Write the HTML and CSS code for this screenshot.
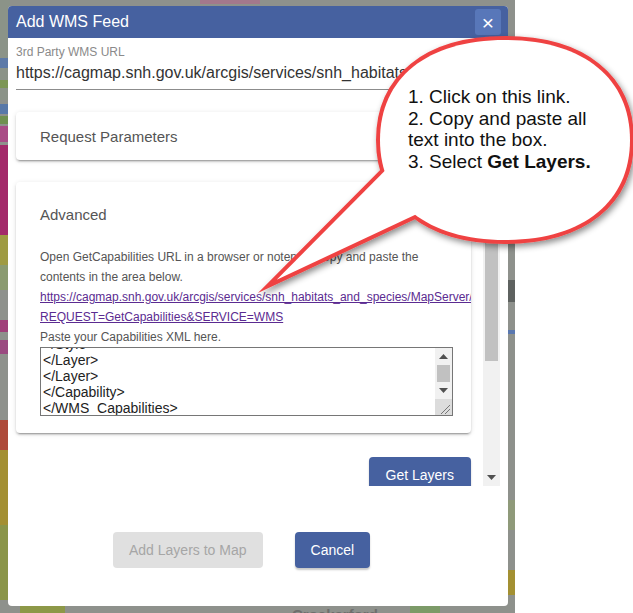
FILE: index.html
```html
<!DOCTYPE html>
<html lang="en">
<head>
    <meta charset="UTF-8">
    <meta name="viewport" content="width=device-width, initial-scale=1.0">
    <title>Add WMS Feed</title>
    <link rel="stylesheet" href="styles.css">
</head>
<body>
    <div class="page">
        <!-- dimmed map behind the dialog -->
        <div class="map">
            <svg width="515" height="613" viewBox="0 0 515 613">
                <rect width="515" height="613" fill="#8e918c"/>
                <rect x="0" y="0" width="10" height="100" fill="#8b9388"/>
                <rect x="0" y="58" width="10" height="10" fill="#5d7aa8"/>
                <rect x="0" y="80" width="10" height="8" fill="#7c9655"/>
                <rect x="0" y="104" width="10" height="10" fill="#5878a8"/>
                <rect x="0" y="116" width="10" height="8" fill="#6f9050"/>
                <rect x="0" y="126" width="10" height="16" fill="#a94c86"/>
                <rect x="0" y="145" width="10" height="90" fill="#a3296a"/>
                <rect x="0" y="235" width="10" height="30" fill="#9e9a42"/>
                <rect x="0" y="265" width="10" height="25" fill="#8a9a70"/>
                <rect x="0" y="320" width="10" height="12" fill="#a0407a"/>
                <rect x="0" y="340" width="10" height="14" fill="#9a4a80"/>
                <rect x="0" y="420" width="10" height="30" fill="#ad4a3a"/>
                <rect x="0" y="450" width="10" height="75" fill="#a38f32"/>
                <rect x="0" y="525" width="10" height="75" fill="#8a9549"/>
                <rect x="505" y="280" width="10" height="22" fill="#5e6260"/>
                <rect x="505" y="330" width="10" height="4" fill="#5a78b0"/>
                <rect x="505" y="500" width="10" height="30" fill="#8f9a7a"/>
                <rect x="505" y="570" width="10" height="25" fill="#a39032"/>
                <rect x="200" y="0" width="60" height="4" fill="#a3788c"/>
                <rect x="20" y="606" width="45" height="7" fill="#8d9848"/>
                <rect x="410" y="606" width="30" height="7" fill="#7c9a68"/>
                <text x="292" y="620" font-family="Liberation Sans, sans-serif" font-size="15" font-weight="bold" fill="#6e6e6c">Crockerford</text>
            </svg>
        </div>

        <div class="modal">
            <div class="modal-header">
                <span class="modal-title">Add WMS Feed</span>
                <span class="close-btn">&times;</span>
            </div>

            <div class="url-field">
                <div class="url-label">3rd Party WMS URL</div>
                <div class="url-input">https://cagmap.snh.gov.uk/arcgis/services/snh_habitats_and_species/MapServer/WMSServer</div>
            </div>

            <div class="scroll-area">
                <div class="scroll-content">
                    <div class="panel">
                        <div class="panel-head">Request Parameters</div>
                    </div>

                    <div class="panel open">
                        <div class="panel-head">Advanced</div>
                        <div class="panel-body">
                            <div>Open GetCapabilities URL in a browser or notepad, copy and paste the</div>
                            <div>contents in the area below.</div>
                            <a class="xml-link" href="#">https://cagmap.snh.gov.uk/arcgis/services/snh_habitats_and_species/MapServer/WMSServer?<br>REQUEST=GetCapabilities&amp;SERVICE=WMS</a>
                            <div>Paste your Capabilities XML here.</div>
                            <div class="xml-box">
                                <div class="xml-text"><div class="xml-lines">&lt;/Style&gt;
&lt;/Layer&gt;
&lt;/Layer&gt;
&lt;/Capability&gt;
&lt;/WMS_Capabilities&gt;</div></div>
                                <div class="xml-scroll">
                                    <span class="sb-btn"><svg width="9" height="5"><polygon points="0,5 9,5 4.5,0" fill="#505050"/></svg></span>
                                    <span class="xml-thumb"></span>
                                    <span class="sb-btn"><svg width="9" height="5"><polygon points="0,0 9,0 4.5,5" fill="#505050"/></svg></span>
                                    <span class="xml-corner"><svg width="17" height="16"><path d="M15 6 L6 15 M15 10 L10 15" stroke="#777" stroke-width="1"/></svg></span>
                                </div>
                            </div>
                        </div>
                    </div>

                    <div class="actions">
                        <button class="btn btn-primary btn-wide">Get Layers</button>
                    </div>
                </div>

                <div class="scrollbar">
                    <span class="sb-btn"><svg width="9" height="5"><polygon points="0,5 9,5 4.5,0" fill="#505050"/></svg></span>
                    <span class="sb-thumb"></span>
                    <span class="sb-space"></span>
                    <span class="sb-btn"><svg width="9" height="5"><polygon points="0,0 9,0 4.5,5" fill="#505050"/></svg></span>
                </div>
            </div>

            <div class="modal-footer">
                <button class="btn btn-disabled">Add Layers to Map</button>
                <button class="btn btn-primary">Cancel</button>
            </div>
        </div>

        <!-- speech bubble annotation -->
        <svg class="callout" width="633" height="613" viewBox="0 0 633 613">
            <defs>
                <filter id="bubbleShadow" x="-10%" y="-10%" width="130%" height="130%">
                    <feDropShadow dx="2" dy="3" stdDeviation="3" flood-color="#000" flood-opacity="0.45"/>
                </filter>
            </defs>
            <g filter="url(#bubbleShadow)">
                <path d="M380 140 C380 78 427 40 505 40 C583 40 630 78 630 140 C630 202 583 240 505 240 C427 240 380 202 380 140 Z" fill="#ef4343" stroke="#ef4343" stroke-width="8"/>
                <polygon points="276.7,279.8 400,155.6 435,205.4" fill="#ef4343" stroke="#ef4343" stroke-width="8" stroke-miterlimit="20"/>
            </g>
            <path d="M380 140 C380 78 427 40 505 40 C583 40 630 78 630 140 C630 202 583 240 505 240 C427 240 380 202 380 140 Z" fill="#fff"/>
            <polygon points="276.7,279.8 400,155.6 435,205.4" fill="#fff"/>
        </svg>
        <div class="callout-text">
            1. Click on this link.<br>
            2. Copy and paste all<br>
            text into the box.<br>
            3. Select <b>Get Layers.</b>
        </div>
    </div>
</body>
</html>
```

FILE: styles.css
```css
body {
    margin: 0;
    font-family: "Liberation Sans", Arial, sans-serif;
    background-color: #fff;
}

.page {
    position: relative;
    width: 633px;
    height: 613px;
    overflow: hidden;
}

.map {
    width: 515px;
    height: 613px;
}

.map svg {
    display: block;
}

/* dialog */
.modal {
    position: absolute;
    left: 8px;
    top: 6px;
    width: 500px;
    height: 600px;
    background-color: #fff;
    border-radius: 4px;
    overflow: hidden;
    display: flex;
    flex-direction: column;
}

.modal-header {
    height: 32px;
    flex-shrink: 0;
    background-color: #4661a0;
    color: #fff;
    display: flex;
    align-items: center;
    justify-content: space-between;
    padding: 0 7px 0 8px;
}

.modal-title {
    font-size: 16px;
}

.close-btn {
    width: 26px;
    height: 26px;
    background-color: #5877b9;
    border-radius: 3px;
    display: flex;
    align-items: center;
    justify-content: center;
    font-size: 21px;
    line-height: 1;
}

.url-field {
    padding: 7px 16px 0 8px;
}

.url-label {
    font-size: 12px;
    line-height: 14px;
    color: #8a8a8a;
}

.url-input {
    font-size: 16px;
    line-height: 20px;
    color: #333;
    padding: 4px 0 6px;
    border-bottom: 1px solid #8c8c8c;
    white-space: nowrap;
    overflow: hidden;
}

/* scrolling body */
.scroll-area {
    margin-top: 8px;
    height: 388px;
    flex-shrink: 0;
    display: flex;
    padding-right: 8px;
}

.scroll-content {
    flex: 1;
    overflow: hidden;
    padding: 14px 12px 0 8px;
}

.scrollbar {
    width: 17px;
    background-color: #f1f1f1;
    display: flex;
    flex-direction: column;
}

.sb-btn {
    height: 17px;
    flex-shrink: 0;
    display: flex;
    align-items: center;
    justify-content: center;
}

.sb-btn svg {
    display: block;
}

.sb-thumb {
    height: 246px;
    margin: 0 2px;
    background-color: #c1c1c1;
}

.sb-space {
    flex: 1;
}

.panel {
    background-color: #fff;
    border-radius: 4px;
    overflow: hidden;
    box-shadow: 0 3px 1px -2px rgba(0, 0, 0, 0.2), 0 2px 2px 0 rgba(0, 0, 0, 0.14), 0 1px 5px 0 rgba(0, 0, 0, 0.12);
}

.panel-head {
    height: 48px;
    padding: 0 24px;
    display: flex;
    align-items: center;
    font-size: 15px;
    color: #555;
}

.panel.open {
    margin-top: 22px;
}

.panel.open .panel-head {
    height: 64px;
}

.panel-body {
    padding: 1px 18px 17px 24px;
    font-size: 12px;
    line-height: 20px;
    color: #555;
}

.xml-link {
    display: block;
    color: #5b2b91;
    white-space: nowrap;
}

.xml-box {
    width: 413px;
    height: 69px;
    box-sizing: border-box;
    border: 1px solid #767676;
    display: flex;
    overflow: hidden;
}

.xml-text {
    flex: 1;
    overflow: hidden;
    padding-left: 2px;
}

.xml-lines {
    margin-top: -12px;
    font-size: 14px;
    line-height: 16px;
    color: #222;
    white-space: pre;
}

.xml-scroll {
    width: 17px;
    background-color: #f1f1f1;
    display: flex;
    flex-direction: column;
}

.xml-thumb {
    height: 17px;
    margin: 0 2px;
    background-color: #c1c1c1;
}

.xml-corner {
    height: 16px;
    background-color: #dcdcdc;
}

.xml-corner svg {
    display: block;
}

.actions {
    margin-top: 24px;
    display: flex;
    justify-content: flex-end;
}

.btn {
    height: 36px;
    padding: 0 16px;
    border: 0;
    border-radius: 4px;
    font-family: inherit;
    font-size: 14px;
    display: inline-flex;
    align-items: center;
    flex-shrink: 0;
}

.btn-wide {
    padding: 0 17px;
}

.btn-primary {
    background-color: #4661a0;
    color: #fff;
    box-shadow: 0 2px 2px rgba(0, 0, 0, 0.22);
}

.btn-disabled {
    background-color: #e0e0e0;
    color: #a6a6a6;
}

.modal-footer {
    display: flex;
    gap: 32px;
    padding: 46px 0 0 105px;
}

/* annotation */
.callout {
    position: absolute;
    left: 0;
    top: 0;
    pointer-events: none;
}

.callout-text {
    position: absolute;
    left: 408px;
    top: 86px;
    font-size: 19px;
    line-height: 21.7px;
    color: #111;
    white-space: nowrap;
}
```
